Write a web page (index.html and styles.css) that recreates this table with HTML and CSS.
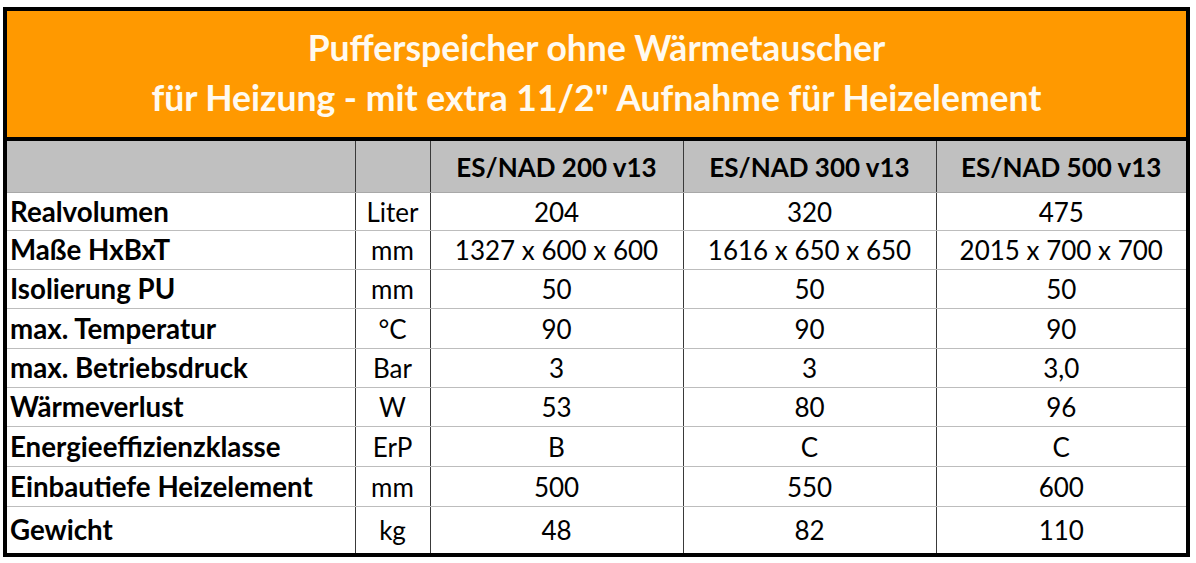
FILE: index.html
```html
<!DOCTYPE html>
<html lang="de">
<head>
<meta charset="utf-8">
<title>Pufferspeicher ohne Wärmetauscher</title>
<link rel="stylesheet" href="styles.css">
</head>
<body>
<div class="sheet">
  <div class="title">
    <div class="title-line">Pufferspeicher ohne Wärmetauscher</div>
    <div class="title-line">für Heizung - mit extra 11/2" Aufnahme für Heizelement</div>
  </div>
  <table class="spec">
    <colgroup>
      <col class="c-label">
      <col class="c-unit">
      <col class="c-val">
      <col class="c-val">
      <col class="c-val-last">
    </colgroup>
    <thead>
      <tr class="head">
        <th></th>
        <th></th>
        <th>ES/NAD 200 v13</th>
        <th>ES/NAD 300 v13</th>
        <th>ES/NAD 500 v13</th>
      </tr>
    </thead>
    <tbody>
      <tr class="r38"><td class="label">Realvolumen</td><td>Liter</td><td>204</td><td>320</td><td>475</td></tr>
      <tr class="r39"><td class="label">Maße HxBxT</td><td>mm</td><td>1327 x 600 x 600</td><td>1616 x 650 x 650</td><td>2015 x 700 x 700</td></tr>
      <tr class="r39"><td class="label">Isolierung PU</td><td>mm</td><td>50</td><td>50</td><td>50</td></tr>
      <tr class="r40"><td class="label">max. Temperatur</td><td>°C</td><td>90</td><td>90</td><td>90</td></tr>
      <tr class="r39"><td class="label">max. Betriebsdruck</td><td>Bar</td><td>3</td><td>3</td><td>3,0</td></tr>
      <tr class="r39"><td class="label">Wärmeverlust</td><td>W</td><td>53</td><td>80</td><td>96</td></tr>
      <tr class="r40"><td class="label">Energieeffizienzklasse</td><td>ErP</td><td>B</td><td>C</td><td>C</td></tr>
      <tr class="r40"><td class="label">Einbautiefe Heizelement</td><td>mm</td><td>500</td><td>550</td><td>600</td></tr>
      <tr class="r47 last"><td class="label">Gewicht</td><td>kg</td><td>48</td><td>82</td><td>110</td></tr>
    </tbody>
  </table>
</div>
</body>
</html>
```

FILE: styles.css
```css
html, body {
  margin: 0;
  padding: 0;
  background: #ffffff;
}

body {
  font-family: Lato, "Liberation Sans", sans-serif;
  color: #000;
}

.sheet {
  box-sizing: border-box;
  width: 1187px;
  margin: 7px 0 0 3px;
  border: 4px solid #000;
}

.title {
  box-sizing: border-box;
  height: 130px;
  background: #ff9900;
  border-bottom: 4px solid #000;
  color: #fffaf0;
  font-weight: 700;
  font-size: 35.5px;
  text-align: center;
  padding-top: 18px;
}

.title-line {
  height: 50px;
  line-height: 38px;
}

.spec {
  width: 1179px;
  border-collapse: collapse;
  table-layout: fixed;
}

.c-label { width: 348px; }
.c-unit { width: 75px; }
.c-val { width: 253px; }
.c-val-last { width: 250px; }

.spec th,
.spec td {
  padding: 0;
  border-left: 1px solid #3a3a3a;
  border-bottom: 1px solid #bdbdbd;
  text-align: center;
  vertical-align: middle;
  font-size: 26px;
  line-height: 30px;
  white-space: nowrap;
}

.spec th:first-child,
.spec td:first-child {
  border-left: none;
}

.head th {
  background: #c0c0c0;
  height: 51px;
  font-weight: 700;
  font-size: 26px;
  border-bottom-color: #a8a8a8;
}

.spec td.label {
  text-align: left;
  font-weight: 700;
  font-size: 27.7px;
  padding-left: 3px;
}

.r38 td { height: 37px; }
.r39 td { height: 38px; }
.r40 td { height: 39px; }
.r47 td { height: 46px; }

.last td { border-bottom: none; }
```
